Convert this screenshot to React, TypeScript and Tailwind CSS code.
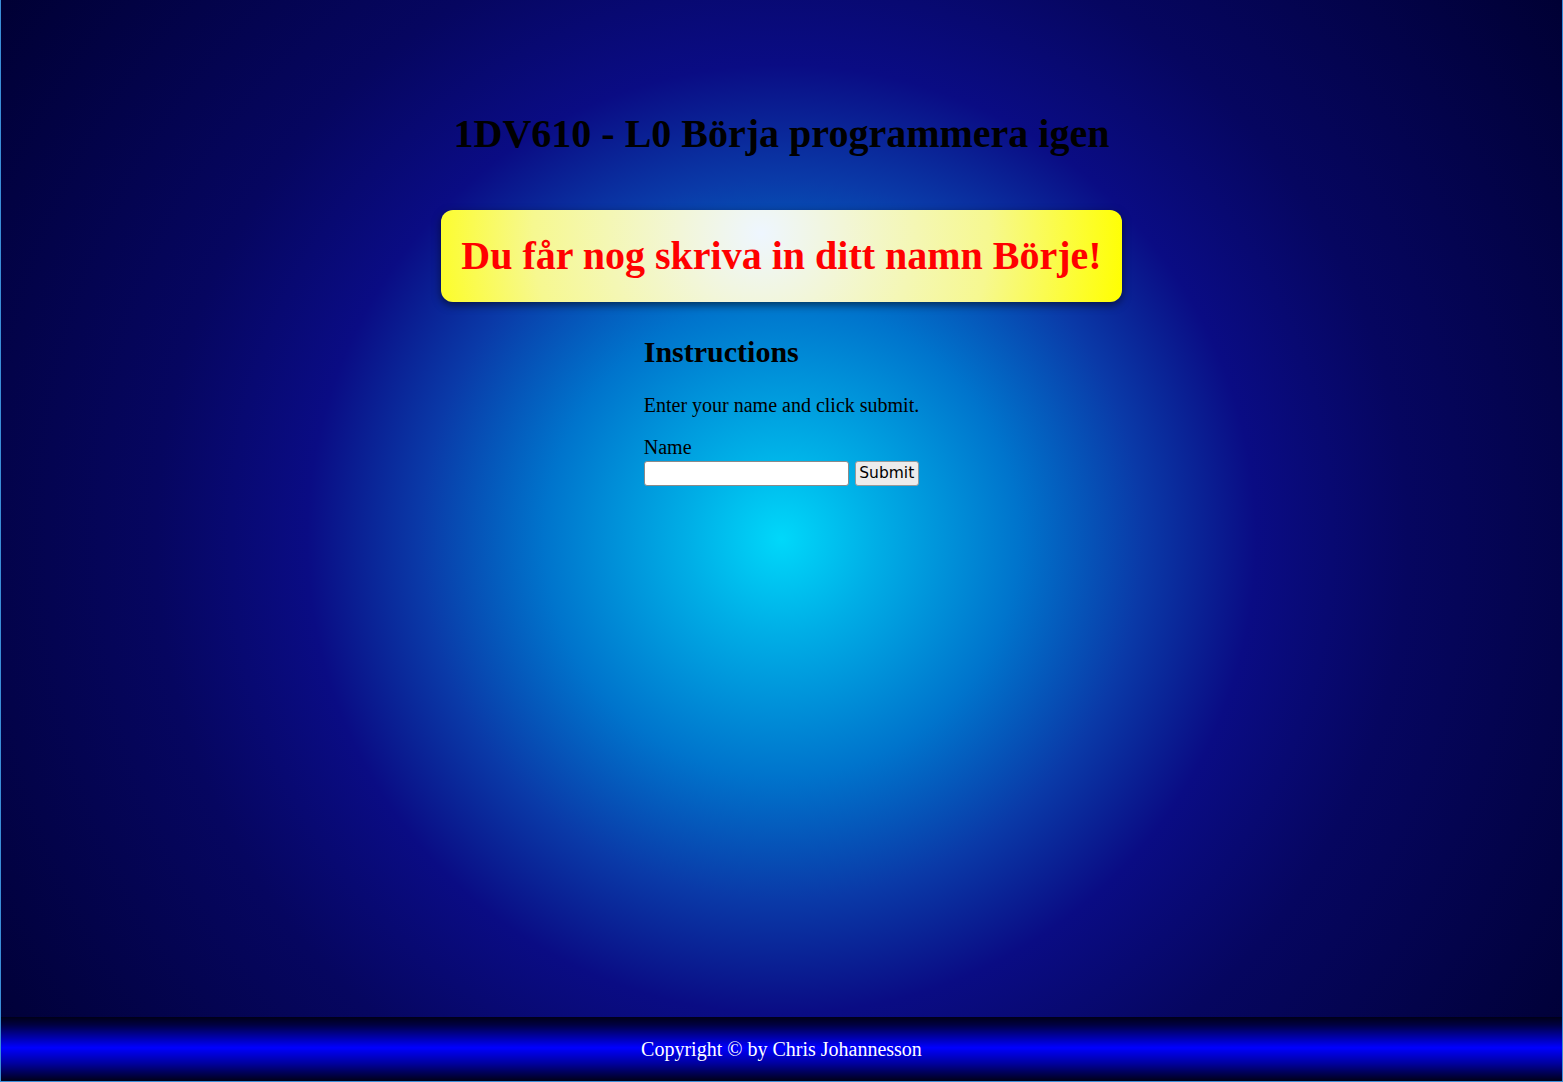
export default function App() {
  return (
    <div className="flex min-h-screen flex-col border-x border-b border-x-[#3a8ed8] border-b-[#3a8ed8] font-['Liberation_Serif','Times_New_Roman',serif] text-black">
      <main className="flex h-[1017px] flex-col items-center bg-[radial-gradient(circle_at_50%_53%,#00d8fa_0%,#00aee6_10%,#0074cc_25%,#0a3aa8_38%,#0a0c84_50%,#060660_66%,#000034_100%)]">
        <h1 className="mt-[111px] text-[40px] font-bold leading-[46px]">1DV610 - L0 Börja programmera igen</h1>
        <div className="mt-[53px] rounded-[12px] bg-[radial-gradient(circle_at_47%_25%,#eef6ff_0%,#f2f6d8_22%,#f6f890_62%,#ffff00_100%)] px-5 py-[23px] shadow-[0_3px_8px_rgba(0,0,0,0.55)]">
          <h2 className="text-[40px] font-bold leading-[46px] text-[#ff0000]">Du får nog skriva in ditt namn Börje!</h2>
        </div>
        <section className="mt-[33px]">
          <h2 className="text-[30px] font-bold leading-[34px]">Instructions</h2>
          <p className="mt-[25px] text-[20px] leading-[23px]">Enter your name and click submit.</p>
          <form className="mt-[19px]" onSubmit={(e) => e.preventDefault()}>
            <label htmlFor="name" className="block text-[20px] leading-[23px]">Name</label>
            <div className="mt-[2px] flex items-center gap-[6px]">
              <input
                id="name"
                type="text"
                className="h-[25px] w-[205px] rounded-[3px] border border-[#8a8a8a] bg-white px-1 font-['DejaVu_Sans',sans-serif] text-[15px]"
              />
              <button
                type="submit"
                className="h-[25px] w-[64px] rounded-[3px] border border-[#999999] bg-[#ececec] font-['DejaVu_Sans','Liberation_Sans',sans-serif] text-[15.5px] leading-none text-black"
              >
                Submit
              </button>
            </div>
          </form>
        </section>
      </main>
      <footer className="flex h-[64px] items-center justify-center bg-[linear-gradient(to_bottom,#000018_0%,#000040_12%,#0000ff_48%,#0000a0_72%,#000018_100%)]">
        <p className="text-[20px] text-white">Copyright © by Chris Johannesson</p>
      </footer>
    </div>
  )
}
